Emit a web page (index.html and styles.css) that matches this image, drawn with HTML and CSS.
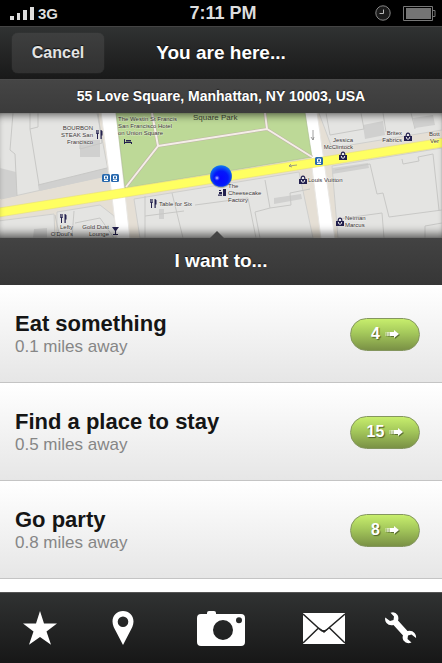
FILE: index.html
```html
<!DOCTYPE html>
<html lang="en">
<head>
<meta charset="utf-8">
<meta name="viewport" content="width=device-width, initial-scale=1">
<title>You are here</title>
<link rel="stylesheet" href="styles.css">
</head>
<body>
<div class="app">
  <div class="status">
    <div class="carrier">
      <svg width="24" height="13" viewBox="0 0 24 13" fill="#ddd" aria-hidden="true"><path d="M0 9h4v4H0zM7 6h3v7H7zM13 3h4v10h-4zM20 0h4v13h-4z"/></svg>
      <span>3G</span>
    </div>
    <time class="clock">7:11 PM</time>
    <div class="indicators">
      <svg width="16" height="16" viewBox="0 0 16 16" fill="none" stroke="#858585" aria-hidden="true"><circle cx="8" cy="8" r="7.2" fill="#1b1b1b"/><path d="M8.5 4.5v4h-4" stroke="#bbb"/></svg>
      <svg width="33" height="15" viewBox="0 0 33 15" aria-hidden="true"><path d="M.5.5h29v14H.5zM30 4.500h2v6h-2" fill="none" stroke="#777"/><path d="M3 2h25v11H3z" fill="#747474"/></svg>
    </div>
  </div>

  <header class="navbar">
    <button class="cancel" type="button">Cancel</button>
    <h1 class="heading">You are here...</h1>
  </header>
  <p class="address">55 Love Square, Manhattan, NY 10003, USA</p>

  <div class="map">
    <svg class="map-art" viewBox="0 113 442 125" preserveAspectRatio="xMidYMid slice" role="img" aria-label="Map around the current position">
      <defs>
        <radialGradient id="ball" cx=".5" cy=".6" r=".65"><stop offset="0" stop-color="#0808ff"/><stop offset=".5" stop-color="#0418fa"/><stop offset="1" stop-color="#1290ec"/></radialGradient>
        <radialGradient id="shine"><stop offset="0" stop-color="#d8dcff"/><stop offset="1" stop-color="#4050ff" stop-opacity="0"/></radialGradient>
        <g id="fork"><path d="M0 0v3q0 1 1 1v5h1V4q1 0 1-1V0h-.6v3h-.6V0h-.6v3h-.5V0zM4.500 0v9h1.200V5.500h.8V1.200Q5.800 0 4.500 0z"/></g>
        <g id="bag"><path d="M0 4h8v5H0zM1.500 4.500q0-4 2.500-4t2.500 4" fill="#23204e" stroke="none"/><path d="M2.700 4q0-2.300 1.300-2.300T5.300 4z" fill="#eee"/><path d="M2.300 5q0 2.300 1.700 2.300T5.700 5" fill="none" stroke="#eee"/></g>
      </defs>
      <path fill="#e5dfd5" d="M0 113h442v125H0z"/>
      <g fill="#e4e4e2" stroke="#cfcfcd">
        <path d="M-2 113h99l12 62-108 24zM319 113h123v17l-110 18z"/>
        <path d="M-2 221l56-7 1 24H-2zM57 212l43-7 14 11 4 22H57zM134 199l165-27 14 66H140zM332 166l110-18v90H338z"/>
      </g>
      <g fill="#d0d0cf">
        <path d="M38 185l69-17 2 8-70 15zM0 168l16 4 1 24-17 3zM80 140h20v17H80z"/>
        <path d="M363 125l20-4 2 14-20 4zM413 118l20-3 2 10-20 3zM332 168l36-5 1 5-37 6zM34 229l13-1v10H33zM159 209h5v10h-5zM274 198l27-4 1 5-28 5z"/>
      </g>
      <g fill="none" stroke="#c8c8c6">
        <path d="M13 113L10 150l5 4 2 42M30 113v16l8-2V113M30 129l9 56M38 185l69-17M98 113l4 30-22 6v-9"/>
        <path d="M55 215l5 23M74 211l-2 27M75 223l25-5 14 20M145 196v42M172 193l11 45M184 211l-39 5M195 205l53-7 8 40M265 180l5 28-15 4 5 26M270 208l21-3-1-12 20-4M335 170l35-6 7 30 6-1 6 24 53-7M338 219l44-6 2 25M402 159l1 5 16-3-1-4 15-3 6 56M425 238v-12l17-3M326 113l4 22 34-6-3-16M383 113l3 19M411 113l4 16"/>
      </g>
      <path fill="#fff" stroke="#e9e7e3" d="M101 112h15l14 127h-13l-6-50zM305 112h12l18 127h-14z"/>
      <path fill="#bdd997" stroke="#a9bd8f" stroke-width=".6" d="M116 113h189l7 44-187 31z"/>
      <path fill="none" stroke="#bdb5a5" stroke-width="3" d="M126 187l32-41-6-33M158 146l109-17 45 28M267 129l-2-16"/>
      <path fill="none" stroke="#f5eee8" stroke-width="2" d="M126 187l32-41-6-33M158 146l109-17 45 28M267 129l-2-16"/>
      <path fill="#ffff61" stroke="#e8df78" stroke-width=".6" d="M-1 208l444-70v9L-1 217z"/>
      <g fill="none" stroke="#888" stroke-width=".8"><path d="M289 166l8-1M291 164l-2 2 3 1M313 130v10M311 137l2 3 1-3"/></g>
      <g fill="#23204e">
        <use href="#fork" x="96" y="130"/><use href="#fork" x="60" y="214"/><use href="#fork" x="150" y="199"/>
        <path d="M124 139h1v3h7v2h-1v-1h-6v1h-1zM126 140h5v1.500h-5zM112 227h7l-3 4v3h2v1h-5v-1h2v-3zM219 192h3v2h-3zM218 194.500h4v1.200h-4zM219 190h2v1h-2zM223 189h3v7h-3z"/>
        <use href="#bag" x="339" y="151"/><use href="#bag" x="404" y="132"/><use href="#bag" x="299" y="175"/><use href="#bag" x="336" y="217"/>
      </g>
      <g fill="#2869ae"><rect x="102" y="174" width="8" height="8" rx="1.500"/><rect x="111" y="174" width="8" height="8" rx="1.500"/><rect x="315" y="157" width="8" height="8" rx="1.500"/></g>
      <path fill="none" stroke="#fff" d="M104.500 176h3v3h-3zM113.500 176h3v3h-3zM317.500 159h3v3h-3zM104 180.500h4M113 180.500h4M317 163.500h4"/>
      <g class="place">
        <g text-anchor="end"><text x="93" y="130">BOURBON</text><text x="93" y="137">STEAK San</text><text x="93" y="144">Francisco</text>
        <text x="73" y="229">Lefty</text><text x="73" y="236">O'Doul's</text><text x="109" y="229">Gold Dust</text><text x="109" y="236">Lounge</text>
        <text x="353" y="142">Jessica</text><text x="353" y="149">McClintock</text><text x="402" y="135">Britex</text><text x="402" y="142">Fabrics</text></g>
        <text x="118" y="121">The Westin St Francis</text><text x="118" y="128">San Francisco Hotel</text><text x="118" y="135">on Union Square</text>
        <text x="159" y="206">Table for Six</text>
        <text x="228" y="188">The</text><text x="228" y="195">Cheesecake</text><text x="228" y="202">Factory</text>
        <text x="308" y="182">Louis Vuitton</text><text x="345" y="220">Neiman</text><text x="345" y="227">Marcus</text>
        <text x="429" y="136">Bott</text><text x="430" y="143">Ver</text>
      </g>
      <text class="park" x="193" y="120">Square Park</text>
      <circle cx="221" cy="177" r="11" fill="#39502d" opacity=".35"/>
      <circle cx="221" cy="176" r="10.800" fill="url(#ball)"/>
      <circle cx="217" cy="178" r="3" fill="url(#shine)"/>
    </svg>
  </div>

  <h2 class="want">I want to...</h2>

  <ul class="choices">
    <li class="choice">
      <div><h3 class="name">Eat something</h3><p class="distance">0.1 miles away</p></div>
      <a class="count" href="#eat">4 <svg class="arrow" viewBox="0 0 14 8" aria-hidden="true"><path d="M0 2h2v4H0z" opacity=".3"/><path d="M2 2h2v4H2z" opacity=".6"/><path d="M4.500 2H9V0l5 4-5 4V6H4.500z"/></svg></a>
    </li>
    <li class="choice">
      <div><h3 class="name">Find a place to stay</h3><p class="distance">0.5 miles away</p></div>
      <a class="count" href="#stay">15 <svg class="arrow" viewBox="0 0 14 8" aria-hidden="true"><path d="M0 2h2v4H0z" opacity=".3"/><path d="M2 2h2v4H2z" opacity=".6"/><path d="M4.500 2H9V0l5 4-5 4V6H4.500z"/></svg></a>
    </li>
    <li class="choice">
      <div><h3 class="name">Go party</h3><p class="distance">0.8 miles away</p></div>
      <a class="count" href="#party">8 <svg class="arrow" viewBox="0 0 14 8" aria-hidden="true"><path d="M0 2h2v4H0z" opacity=".3"/><path d="M2 2h2v4H2z" opacity=".6"/><path d="M4.500 2H9V0l5 4-5 4V6H4.500z"/></svg></a>
    </li>
  </ul>

  <nav class="tabs">
    <button class="tab" type="button" aria-label="Favourites"><svg width="34" height="34" viewBox="0 0 34 34" fill="#fff"><path d="M17 0l4 12.500h13l-10.500 8 4.500 13.200L17 26 6 33.700l4.500-13.200L0 12.500h13z"/></svg></button>
    <button class="tab" type="button" aria-label="Places"><svg width="22" height="34" viewBox="0 0 22 34" fill="#fff" fill-rule="evenodd"><path d="M11 0C17 0 21.500 4.500 21.500 10.500c0 4-2 7-3.500 10L11 34 4 20.500c-1.500-3-3.500-6-3.500-10C.5 4.500 5 0 11 0zm0 5.500a5.300 5.300 0 100 10.600 5.300 5.300 0 000-10.600z"/></svg></button>
    <button class="tab" type="button" aria-label="Camera"><svg width="48" height="35" viewBox="0 0 48 35" fill="#fff" fill-rule="evenodd"><path d="M4 3h6V2q0-2 2-2h5q2 0 2 2v1h25q4 0 4 4v24q0 4-4 4H4q-4 0-4-4V7q0-4 4-4zM26 9a10 10 0 100 20 10 10 0 000-20zM42 6.200a3 3 0 100 6 3 3 0 000-6z"/></svg></button>
    <button class="tab" type="button" aria-label="Mail"><svg width="42" height="31" viewBox="0 0 42 31"><path fill="#fff" d="M0 0h42v31H0z"/><path d="M0 1l17 15.500q3.500 3.500 7 0L42 1M0 30l15.500-15M42 30L26.500 15" fill="none" stroke="#202121" stroke-width="1.500"/><path d="M15 14l3 2q3 2.500 6 0l3-2-6 6z" fill="#202121"/></svg></button>
    <button class="tab" type="button" aria-label="Settings"><svg width="32" height="32" viewBox="0 0 32 32" fill="#fff"><path d="M5.500.8Q10-.8 12.500 3q1.500 2.500.5 5.500L22.500 19q4.500-1 7 2 2 2.500 1.500 5l-4.500-3.500-3.500 1-.5 3.500 4 3.500q-5 2-8-2-1.500-2.500-.5-5L8.500 13q-4.500 1-7-2Q-.5 8.500.3 5.500L5 9l3.500-1L9 4.500z"/></svg></button>
  </nav>
</div>
</body>
</html>
```
FILE: styles.css
```css
* {
  box-sizing: border-box;
}

body,
h1,
h2,
h3,
p,
ul {
  margin: 0;
  padding: 0;
}

body {
  background: #fff;
  color: #fff;
  font-family: "Liberation Sans", Arial, sans-serif;
}

button {
  border: 0;
  padding: 0;
  font: inherit;
  color: inherit;
}

svg {
  display: block;
}

.app {
  display: flex;
  flex-direction: column;
  height: 100vh;
}

.app > * {
  flex-shrink: 0;
}

.status,
.navbar {
  display: grid;
  grid-template-columns: 1fr auto 1fr;
  align-items: center;
}

.status {
  height: 26px;
  padding: 0 6px 0 10px;
  background: #000;
  color: #ddd;
}

.carrier,
.indicators {
  display: flex;
  align-items: center;
}

.carrier {
  gap: 4px;
  font-size: 15px;
  font-weight: bold;
}

.clock {
  font-size: 18px;
  font-weight: bold;
}

.indicators {
  justify-content: flex-end;
  gap: 12px;
}

.navbar {
  height: 53px;
  padding: 0 12px;
  border-top: 1px solid #444;
  background: linear-gradient(#303232, #191919);
}

.cancel {
  justify-self: start;
  width: 92px;
  height: 40px;
  border-radius: 6px;
  background: linear-gradient(#3e3f3f, #313131);
  box-shadow: 0 0 1px #555;
  color: #e4e4e4;
  font-size: 16px;
  font-weight: bold;
  text-shadow: 0 -1px 1px #111;
}

.heading,
.want {
  font-size: 19px;
  line-height: 24px;
  text-align: center;
  text-shadow: 0 -1px 1px #111;
}

.address {
  height: 34px;
  border-top: 1px solid #4b4b4b;
  background: linear-gradient(#454545, #3b3b3b);
  font-size: 14px;
  font-weight: bold;
  line-height: 33px;
  text-align: center;
  text-shadow: 0 -1px 1px #222;
}

.map {
  position: relative;
  height: 125px;
  overflow: hidden;
}

.map-art {
  width: 100%;
  height: 100%;
}

.map::before {
  content: "";
  position: absolute;
  inset: 0;
  box-shadow: inset 0 8px 8px -6px rgba(0, 0, 0, .6), inset 0 -10px 10px -6px rgba(0, 0, 0, .6);
}

.map::after {
  content: "";
  position: absolute;
  bottom: 0;
  left: 49%;
  border: 7px solid transparent;
  border-top: 0;
  border-bottom-color: #444;
  transform: translateX(-50%);
}

.place {
  fill: #3c3838;
  font-size: 6px;
  paint-order: stroke;
  stroke: rgba(255, 255, 255, .4);
}

.park {
  fill: #3c4535;
  font-size: 8px;
}

.want {
  height: 47px;
  background: linear-gradient(#434343, #363636);
  line-height: 46px;
}

.app > .choices {
  flex: 1 1 0;
  min-height: 0;
  overflow: hidden;
  list-style: none;
}

.choice {
  display: flex;
  align-items: center;
  justify-content: space-between;
  height: 98px;
  padding: 0 22px 0 15px;
  border-top: 1px solid #fff;
  border-bottom: 1px solid #c4c4c4;
  background: linear-gradient(#fff, #e6e6e6);
}

.name {
  color: #151515;
  font-size: 22px;
  line-height: 26px;
}

.distance {
  color: #868686;
  font-size: 17px;
  line-height: 20px;
}

.count {
  display: flex;
  align-items: center;
  justify-content: center;
  gap: 5px;
  width: 70px;
  height: 33px;
  border: 1px solid #84965e;
  border-radius: 17px;
  background: linear-gradient(#c7ee6d, #a4c85b 45%, #7a9145);
  color: #fff;
  font-size: 16px;
  font-weight: bold;
  text-decoration: none;
  text-shadow: 1px 1px 1px #4f6128;
}

.arrow {
  width: 14px;
  height: 8px;
  fill: #fff;
  filter: drop-shadow(1px 1px 0 #5d7133);
}

.tabs {
  display: grid;
  grid-template-columns: 80fr 85fr 112fr 94fr 59fr;
  height: 71px;
  padding-right: 12px;
  border-top: 1px solid #555;
  background: linear-gradient(#303232, #171717);
}

.tab {
  display: flex;
  align-items: center;
  justify-content: center;
  background: none;
}
```
